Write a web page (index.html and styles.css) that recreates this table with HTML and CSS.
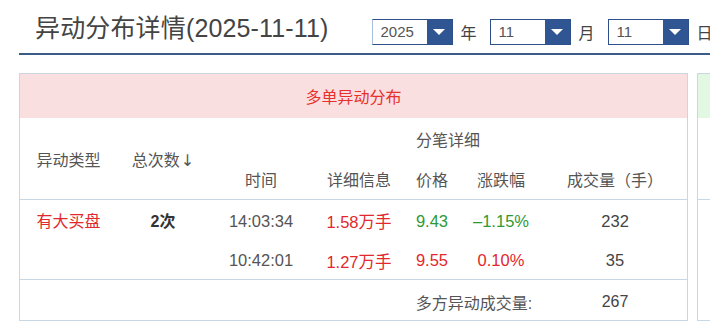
FILE: index.html
```html
<!DOCTYPE html>
<html lang="zh-CN">
<head>
<meta charset="utf-8">
<title>异动分布详情</title>
<link rel="stylesheet" href="styles.css">
</head>
<body>
<div class="page">
  <header class="top">
    <h1 class="title">异动分布详情(2025-11-11)</h1>
    <div class="datepick">
      <div class="sel sel-focus"><span class="sel-val">2025</span><span class="sel-btn"><span class="tri"></span></span></div>
      <span class="unit">年</span>
      <div class="sel"><span class="sel-val">11</span><span class="sel-btn"><span class="tri"></span></span></div>
      <span class="unit">月</span>
      <div class="sel"><span class="sel-val">11</span><span class="sel-btn"><span class="tri"></span></span></div>
      <span class="unit">日</span>
    </div>
  </header>

  <div class="cards">
    <section class="card">
      <table class="grid">
        <colgroup>
          <col class="c1"><col class="c2"><col class="c3"><col class="c4"><col class="c5"><col class="c6"><col class="c7">
        </colgroup>
        <tr class="band band-buy"><td colspan="7">多单异动分布</td></tr>
        <tr class="hd-a">
          <td rowspan="2" class="hd">异动类型</td>
          <td rowspan="2" class="hd">总次数<span class="arrow">↓</span></td>
          <td colspan="5" class="hd">分笔详细</td>
        </tr>
        <tr class="hd-b">
          <td class="hd">时间</td>
          <td class="hd">详细信息</td>
          <td class="hd">价格</td>
          <td class="hd">涨跌幅</td>
          <td class="hd">成交量（手）</td>
        </tr>
        <tr class="row first">
          <td rowspan="2" class="up lead">有大买盘</td>
          <td rowspan="2" class="cnt lead">2次</td>
          <td class="txt">14:03:34</td>
          <td class="up">1.58万手</td>
          <td class="down">9.43</td>
          <td class="down">–1.15%</td>
          <td class="num">232</td>
        </tr>
        <tr class="row">
          <td class="txt">10:42:01</td>
          <td class="up">1.27万手</td>
          <td class="up">9.55</td>
          <td class="up">0.10%</td>
          <td class="num">35</td>
        </tr>
        <tr class="foot">
          <td colspan="4"></td>
          <td colspan="2" class="hd">多方异动成交量:</td>
          <td class="num">267</td>
        </tr>
      </table>
    </section>

    <section class="card">
      <table class="grid">
        <colgroup>
          <col class="c1"><col class="c2"><col class="c3"><col class="c4"><col class="c5"><col class="c6"><col class="c7">
        </colgroup>
        <tr class="band band-sell"><td colspan="7">空单异动分布</td></tr>
        <tr class="hd-a">
          <td rowspan="2" class="hd">异动类型</td>
          <td rowspan="2" class="hd">总次数<span class="arrow">↓</span></td>
          <td colspan="5" class="hd">分笔详细</td>
        </tr>
        <tr class="hd-b">
          <td class="hd">时间</td>
          <td class="hd">详细信息</td>
          <td class="hd">价格</td>
          <td class="hd">涨跌幅</td>
          <td class="hd">成交量（手）</td>
        </tr>
        <tr class="row first empty-row">
          <td colspan="7"></td>
        </tr>
      </table>
    </section>
  </div>
</div>
</body>
</html>
```

FILE: styles.css
```css
html, body {
  margin: 0;
  padding: 0;
  background: #ffffff;
  overflow: hidden;
}

body {
  font-family: "Liberation Sans", "Noto Sans CJK SC", sans-serif;
  color: #555555;
}

.page {
  padding-left: 19px;
  width: 1500px;
}

.top {
  display: flex;
  align-items: flex-start;
  height: 53px;
  border-bottom: 2px solid #3b5b88;
  padding-left: 16px;
  box-sizing: content-box;
}

.title {
  margin: 13px 0 0 0;
  font-size: 25px;
  line-height: 30px;
  font-weight: normal;
  color: #444444;
  white-space: nowrap;
  flex-shrink: 0;
  letter-spacing: 0.15px;
}

.datepick {
  display: flex;
  align-items: center;
  margin-left: 43px;
  margin-top: 19px;
  flex-shrink: 0;
}

.sel {
  display: flex;
  width: 81px;
  height: 26px;
  box-sizing: border-box;
  border: 1px solid #2d4f8a;
  background: #ffffff;
}

.sel-focus {
  border-left-color: #a9bfdf;
}

.sel-val {
  flex: 1;
  padding-left: 8px;
  font-size: 15px;
  line-height: 24px;
  color: #555555;
}

.sel-btn {
  width: 25px;
  background: #2f5593;
  display: flex;
  align-items: center;
  justify-content: center;
}

.tri {
  width: 0;
  height: 0;
  border-left: 6px solid transparent;
  border-right: 6px solid transparent;
  border-top: 6px solid #ffffff;
}

.unit {
  margin: 0 13px 0 8px;
  font-size: 16px;
  color: #444444;
}

.cards {
  display: flex;
  gap: 9px;
  margin-top: 18px;
}

.card {
  flex-shrink: 0;
  width: 669px;
  box-sizing: border-box;
  border: 1px solid #c8d7e3;
}

.grid {
  width: 667px;
  table-layout: fixed;
  border-collapse: separate;
  border-spacing: 0;
  font-size: 16px;
}

.grid td {
  padding: 0;
  text-align: center;
  vertical-align: middle;
  white-space: nowrap;
}

.c1 { width: 97px; }
.c2 { width: 92px; }
.c3 { width: 104px; }
.c4 { width: 92px; }
.c5 { width: 54px; }
.c6 { width: 84px; }
.c7 { width: 144px; }

.band td {
  height: 44px;
  color: #e8302c;
}

.band-buy td { background: #f9dfe0; }
.band-sell td { background: #e3f8e3; color: #2e9a2e; }

.hd-a td { height: 41px; }
.hd-b td { height: 40px; }

.hd { color: #555555; }

.arrow {
  font-family: "DejaVu Sans", sans-serif;
  font-size: 16px;
  margin-left: 1px;
}

.row td {
  height: 40px;
  padding-top: 3px;
  box-sizing: border-box;
  font-size: 16.5px;
}
.row.first td { border-top: 1px solid #c8d7e3; }

.grid td.lead {
  vertical-align: top;
  line-height: 37px;
  font-size: 16px;
}

.foot td {
  height: 41px;
  padding-top: 3px;
  box-sizing: border-box;
  border-top: 1px solid #c8d7e3;
}

.up { color: #e2282c; }
.down { color: #2f9a34; }
.txt { color: #555555; }
.num { color: #444444; }
.cnt { color: #333333; font-weight: bold; }

.empty-row td { height: 121px; }
```
